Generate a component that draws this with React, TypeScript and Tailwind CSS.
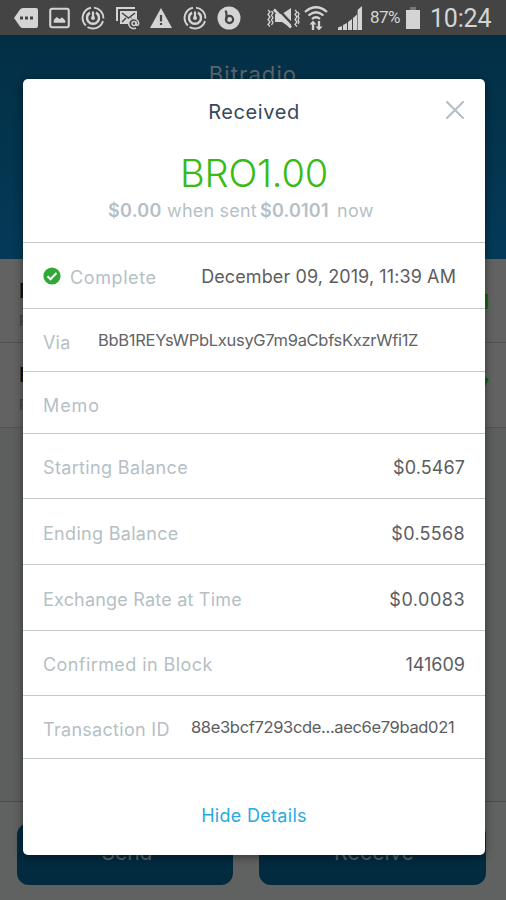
import type { ReactNode } from "react";
import clsx from "clsx";

const balances = [
  { label: "Starting Balance", value: "$0.5467", height: "h-[65px]", labelClass: "tracking-[0.35px]", valueClass: "tracking-[0.1px]" },
  { label: "Ending Balance", value: "$0.5568", height: "h-[66px]", labelClass: "tracking-[0.3px]", valueClass: "tracking-[0.3px]" },
  { label: "Exchange Rate at Time", value: "$0.0083", height: "h-[66px]", labelClass: "tracking-[0.2px]", valueClass: "tracking-[0.5px]" },
  { label: "Confirmed in Block", value: "141609", height: "h-[65px]", labelClass: "tracking-[0.42px]", valueClass: "tracking-[0px]" },
];

function TargetIcon() {
  return (
    <svg viewBox="0 0 24 24" className="size-6 shrink-0" fill="none" stroke="currentColor">
      <path d="M10 1.700A10.500 10.500 0 0 0 4.800 19.500M6.500 21A10.500 10.500 0 0 0 22 15M22.400 12.500A10.500 10.500 0 0 0 13 1.600" strokeWidth="1.900" />
      <path d="M9 6.600a6 6 0 1 0 6 0" strokeWidth="2.400" />
      <path d="M12 5.500v6" strokeWidth="2.200" />
      <circle cx="12" cy="12" r="2" fill="currentColor" stroke="none" />
    </svg>
  );
}

function StatusBar() {
  return (
    <div className="flex h-[35px] shrink-0 items-center bg-[#444444] pl-3.5 text-[#d4d4d4]">
      <svg viewBox="0 0 24 20" className="h-5 w-6 shrink-0">
        <path d="M0 10 6 1.500Q7 0 9 0h13q2 0 2 2v16q0 2-2 2H9q-2 0-3-1.500z" fill="currentColor" />
        <path d="M6 8.500h3v3H6zm5 0h3v3h-3zm5 0h3v3h-3z" fill="#444444" />
      </svg>
      <svg viewBox="0 0 22 22" className="ml-[11px] h-[22px] w-[21px] shrink-0">
        <rect x="1.300" y="1.300" width="19.400" height="19.400" rx="2" fill="none" stroke="currentColor" strokeWidth="2.200" />
        <path d="M5 16v-3l3-3 3 2 3-1.500 3 3V16z" fill="currentColor" />
      </svg>
      <span className="ml-[11px]"><TargetIcon /></span>
      <svg viewBox="0 0 24 24" className="ml-[11px] size-6 shrink-0" fill="none" stroke="currentColor">
        <path d="M1 15V2h18" strokeWidth="2" />
        <path d="M4 5h17v13H4z" fill="currentColor" stroke="none" />
        <path d="m6 7 6.500 5L19 7M6 16l4-4M15 12l3 2" stroke="#444444" strokeWidth="1.500" />
        <circle cx="18" cy="17.500" r="5.500" fill="#444444" stroke="none" />
        <circle cx="18" cy="17.500" r="2" strokeWidth="1.400" />
        <path d="M20 15.500v2.500q0 1.500 1.500 1.300 1.500-.5 1-3A5 5 0 1 0 20 22" strokeWidth="1.500" />
      </svg>
      <svg viewBox="0 0 22 20" className="ml-2.5 h-5 w-[22px] shrink-0">
        <path d="M11 0 22 20H0z" fill="currentColor" />
        <path d="M9.900 7h2.200v6.500H9.900zm0 8h2.200v2H9.900z" fill="#444444" />
      </svg>
      <span className="ml-[11px]"><TargetIcon /></span>
      <svg viewBox="0 0 24 24" className="ml-2.5 size-6 shrink-0">
        <circle cx="12" cy="12" r="11.500" fill="currentColor" />
        <path d="M8.500 4.500q1 1.500 1 4v5" fill="none" stroke="#444444" strokeWidth="2.200" />
        <circle cx="12.500" cy="13.500" r="3.600" fill="none" stroke="#444444" strokeWidth="2.200" />
      </svg>

      <svg viewBox="0 0 34 22" className="ml-[25px] h-[22px] w-[34px] shrink-0" fill="none" stroke="currentColor">
        <path d="m2 3 2 2-2 2.500 2 2.500-2 2.500 2 2.500-2 2.500 2 2M5.500 4l1.500 2-1.500 2.300L7 10.700 5.500 13 7 15.500 5.500 18" strokeWidth="1.300" />
        <path d="m29 3 2 2-2 2.500 2 2.500-2 2.500 2 2.500-2 2.500 2 2M32 5l1 2-1 2 1 2-1 2 1 2-1 2" strokeWidth="1.300" />
        <path d="M9 7h7l9-6v20l-9-6H9z" fill="currentColor" stroke="none" />
        <path d="m11 1 16 17" stroke="#444444" strokeWidth="2.500" />
        <path d="m8 2.500 17 18" strokeWidth="2.600" />
      </svg>
      <svg viewBox="0 0 24 24" className="ml-[4px] size-6 shrink-0" fill="none" stroke="currentColor">
        <path d="M1 6q11-9.500 22 0M4.500 9.500q7.500-6.500 15 0M8 13q4-3.500 8 0" strokeWidth="2.300" />
        <path d="M9 24v-6M15 15v6" strokeWidth="2.300" />
        <path d="m5.500 18.500 3.500-4 3.500 4zM11.500 20.500l3.500 4 3.500-4z" fill="currentColor" stroke="none" />
      </svg>
      <svg viewBox="0 0 24 24" className="ml-[10px] size-6 shrink-0" fill="currentColor">
        <path d="M0 24v-2.500L4 20v4zM5 24v-5l4-2v7zM10 24v-8l4-3v11zM15 24V12l4-3.500V24zM19.600 24V4L24 0v24z" />
      </svg>
      <span className="ml-[8px] w-[35px] font-['Roboto',sans-serif] text-[17px] tracking-[-0.5px]">87%</span>
      <svg viewBox="0 0 14 22" className="ml-[1px] h-[22px] w-[14px] shrink-0">
        <path d="M4 0h6v3H4z" fill="#777777" />
        <path d="M0 3h14v19H0z" fill="currentColor" />
      </svg>
      <span className="ml-[10px] pt-[2px] font-['Roboto',sans-serif] text-[25px] tracking-[-0.2px]">10:24</span>
    </div>
  );
}

function HistoryItem({ mark, className }: { mark: string; className: string }) {
  return (
    <div className={clsx("flex justify-between border-b border-[#515151] px-[17px]", className)}>
      <div className="pt-[17px] pl-0.5">
        <p className="text-xl leading-[30px] font-medium text-[#0b0f12]">R</p>
        <p className="text-sm leading-[30px] text-[#404244]">R</p>
      </div>
      <p className="pt-[28px] text-xl leading-[30px] font-medium text-[#056405]">{mark}</p>
    </div>
  );
}

function Row({ className, children }: { className?: string; children?: ReactNode }) {
  return (
    <div className={clsx("flex items-center border-t-[1.500px] border-[#c6c7c7] px-5", className)}>
      {children}
    </div>
  );
}

function DetailsModal() {
  return (
    <div className="absolute top-[79px] left-[23px] flex h-[776px] w-[462px] flex-col rounded-[5px] bg-white text-lg text-[#b5bfc5] shadow-[0_2px_10px_rgba(0,0,0,0.45)]">
      <div className="relative h-[163px] text-center">
        <h2 className="pt-[18px] text-[20px] leading-[30px] tracking-[0.6px] text-[#35495a]">Received</h2>
        <button type="button" aria-label="Close" className="absolute top-[22px] right-[21px]">
          <svg viewBox="0 0 18 18" className="size-[18px]" stroke="#b3bdc3" strokeWidth="2" strokeLinecap="round">
            <path d="m1 1 16 16M17 1 1 17" />
          </svg>
        </button>
        <p className="mt-[22px] text-[38px] leading-[48px] font-[360] tracking-[-0.2px] text-[#39ba16]">BRO1.00</p>
        <p className="flex pt-[2px] pl-[85px] leading-[24px]">
          <span className="w-[59px] text-left font-semibold tracking-[0.3px]">$0.00</span>
          <span className="w-[93px] text-left tracking-[0.2px]">when sent</span>
          <span className="w-[77px] text-left font-semibold tracking-[0.2px]">$0.0101</span>
          <span className="tracking-[0.3px]">now</span>
        </p>
      </div>
      <Row className="h-[66px]">
        <svg viewBox="0 0 18 18" className="size-[18px]">
          <circle cx="9" cy="9" r="8.600" fill="#2fa836" />
          <path d="m4.500 9.200 3 3 6-6.200" fill="none" stroke="white" strokeWidth="2" />
        </svg>
        <span className="ml-[9px] pt-[4px] tracking-[0.6px]">Complete</span>
        <span className="mr-[9px] ml-auto pt-[3px] tracking-[0.1px] text-[#5b5d5f]">December 09, 2019, 11:39 AM</span>
      </Row>
      <Row className="h-[63px]">
        <span className="w-[55px] pt-[6px] tracking-[0.2px]">Via</span>
        <span className="pt-[2px] text-[16.500px] tracking-[-0.3px] text-[#626465]">BbB1REYsWPbLxusyG7m9aCbfsKxzrWfi1Z</span>
      </Row>
      <Row className="h-[62px]">
        <span className="pt-[6px] tracking-[0.9px]">Memo</span>
      </Row>
      {balances.map((item) => (
        <Row key={item.label} className={item.height}>
          <span className={clsx("pt-[4px]", item.labelClass)}>{item.label}</span>
          <span className={clsx("ml-auto pt-[4px] text-[#5b5d5f]", item.valueClass)}>{item.value}</span>
        </Row>
      ))}
      <Row className="h-[63px]">
        <span className="w-[148px] pt-[6px] tracking-[0.3px]">Transaction ID</span>
        <span className="pt-[2px] text-[16.500px] tracking-[-0.34px] text-[#5b5d5f]">88e3bcf7293cde...aec6e79bad021</span>
      </Row>
      <Row className="flex-1 justify-center">
        <button type="button" className="pt-[18px] tracking-[0.3px] text-[#2ba9dd]">
          Hide Details
        </button>
      </Row>
    </div>
  );
}

export default function App() {
  return (
    <div className="relative flex h-[900px] w-[506px] flex-col overflow-hidden bg-[#5d5f5f] font-['Inter',sans-serif]">
      <StatusBar />
      <header className="h-[224px] shrink-0 bg-linear-to-b from-[#032f45] to-[#043a58] pt-[24px] text-center text-[22px] leading-[30px] tracking-[1.1px] text-[#5a646b]">
        Bitradio
      </header>
      <main className="flex-1 bg-[#5d5f5f]">
        <HistoryItem mark="1" className="h-[84px] bg-[#626262]" />
        <HistoryItem mark="7" className="h-[85px] bg-[#626262]" />
      </main>
      <footer className="flex h-[99px] shrink-0 justify-between border-t border-[#4c4c4c] bg-[#606161] pt-[21px] pr-[20px] pl-[17px] text-[21px] text-[#5d666d]">
        <button type="button" className="h-[62px] w-[216px] rounded-[12px] bg-[#022b40] pb-[2px] pl-[4px]">
          Send
        </button>
        <button type="button" className="h-[62px] w-[227px] rounded-[12px] bg-[#022b40] pb-[2px] pl-[3px] tracking-[0.2px]">
          Receive
        </button>
      </footer>
      <DetailsModal />
    </div>
  );
}
